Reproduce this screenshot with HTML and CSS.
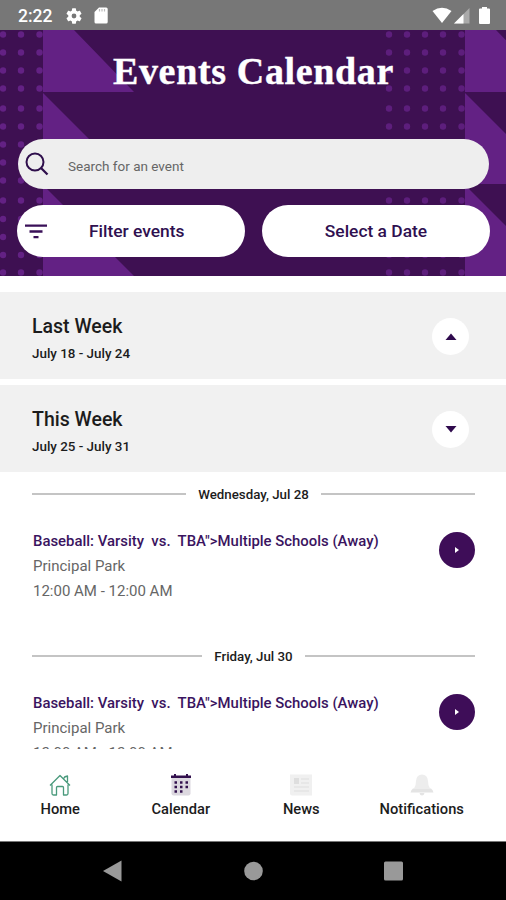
FILE: index.html
```html
<!DOCTYPE html>
<html lang="en">
<head>
    <meta charset="UTF-8">
    <title>Events Calendar</title>
    <link rel="stylesheet" href="styles.css">
</head>
<body>
    <div class="status-bar">
        <span class="clock">2:22</span>
        <svg class="gear" width="16" height="16" viewBox="2 2 20 20"><path fill="#fff" d="M19.14 12.94c.04-.3.06-.61.06-.94s-.02-.64-.07-.94l2.03-1.58a.49.49 0 0 0 .12-.61l-1.92-3.32a.49.49 0 0 0-.59-.22l-2.39.96a7 7 0 0 0-1.62-.94l-.36-2.54a.48.48 0 0 0-.48-.41h-3.84a.48.48 0 0 0-.47.41l-.36 2.54c-.59.24-1.13.57-1.62.94l-2.39-.96a.48.48 0 0 0-.59.22L2.74 8.87a.48.48 0 0 0 .12.61l2.03 1.58a7.5 7.5 0 0 0 0 1.88l-2.03 1.58a.49.49 0 0 0-.12.61l1.92 3.32c.12.22.37.29.59.22l2.39-.96c.5.38 1.03.7 1.62.94l.36 2.54c.05.24.24.41.48.41h3.84c.24 0 .44-.17.47-.41l.36-2.54a7 7 0 0 0 1.62-.94l2.39.96c.22.08.47 0 .59-.22l1.92-3.32a.48.48 0 0 0-.12-.61zM12 15a3 3 0 1 1 0-6 3 3 0 0 1 0 6z"/></svg>
        <svg class="sd" width="14" height="17" viewBox="0 0 14 17"><path fill="#fff" d="M5 .5h7.2A1.5 1.5 0 0 1 13.700 2v13a1.500 1.500 0 0 1-1.500 1.500H2A1.500 1.500 0 0 1 .5 15V5z"/><path stroke="#bbb" stroke-width="1.200" d="M5.500 2v2.500M8 2v2.500M10.500 2v2.500"/></svg>
        <div class="status-right">
            <svg width="20" height="17" viewBox="0 0 20 17"><path fill="#fff" d="M.5 4Q10-2.500 19.500 4L10 16z"/></svg>
            <svg width="16" height="17" viewBox="0 0 16 17"><path fill="#aaa" d="M15.500 1v15.500H0z"/><path fill="#fff" d="M9.500 7v9.500H0z"/></svg>
            <svg class="battery" width="11" height="17" viewBox="0 0 11 17"><path fill="#fff" d="M3 0h5v1.500h2a1 1 0 0 1 1 1V16a1 1 0 0 1-1 1H1a1 1 0 0 1-1-1V2.500a1 1 0 0 1 1-1h2z"/></svg>
        </div>
    </div>

    <header>
        <svg class="pattern" width="506" height="246" viewBox="0 30 506 246">
            <defs>
                <g id="dots" fill="#632184">
                    <circle cx="0" cy="34.500" r="3.200"/><circle cx="0" cy="52.500" r="3.200"/><circle cx="0" cy="70.500" r="3.200"/><circle cx="0" cy="88.500" r="3.200"/>
                    <circle cx="0" cy="108.500" r="3.200"/><circle cx="0" cy="126.500" r="3.200"/><circle cx="0" cy="144.500" r="3.200"/><circle cx="0" cy="162.500" r="3.200"/><circle cx="0" cy="180.500" r="3.200"/>
                    <circle cx="0" cy="200.500" r="3.200"/><circle cx="0" cy="219" r="3.200"/><circle cx="0" cy="237" r="3.200"/><circle cx="0" cy="255" r="3.200"/><circle cx="0" cy="272.500" r="3.200"/>
                </g>
                <path id="flags" fill="#632184" d="M0 30h31l60 62H0zM0 93l91 91H0zM0 185l91 91H0z"/>
            </defs>
            <use href="#dots" x="3"/><use href="#dots" x="21"/><use href="#dots" x="39.500"/>
            <g opacity=".85"><use href="#dots" x="389"/><use href="#dots" x="407"/><use href="#dots" x="425"/><use href="#dots" x="443"/><use href="#dots" x="461.500"/></g>
            <use href="#flags" x="43"/>
            <use href="#flags" x="465"/>
        </svg>
        <h1>Events Calendar</h1>
        <div class="search">
            <svg width="24" height="24" viewBox="0 0 24 24" fill="none" stroke="#2f0f4c" stroke-width="2"><circle cx="10" cy="10" r="8.500"/><path d="M16 16l6.500 6.500" stroke-width="2.300"/></svg>
            <span>Search for an event</span>
        </div>
        <div class="actions">
            <div class="pill filter">
                <svg width="22" height="15" viewBox="0 0 22 15" stroke="#3a1058" stroke-width="2.300"><path d="M0 1.700h22M4.500 7.500h13M8.500 13.200h5"/></svg>
                <span>Filter events</span>
            </div>
            <div class="pill">Select a Date</div>
        </div>
    </header>

    <main>
        <section class="week">
            <div>
                <h2>Last Week</h2>
                <p>July 18 - July 24</p>
            </div>
            <div class="toggle"><svg width="12" height="7" viewBox="0 0 12 7"><path fill="#2f0a4d" d="M.5 7L6 .5 11.500 7z"/></svg></div>
        </section>
        <section class="week">
            <div>
                <h2>This Week</h2>
                <p>July 25 - July 31</p>
            </div>
            <div class="toggle"><svg width="12" height="7" viewBox="0 0 12 7"><path fill="#2f0a4d" d="M.5 0h11L6 6.500z"/></svg></div>
        </section>

        <div class="day"><span>Wednesday, Jul 28</span></div>
        <article class="event">
            <div>
                <h3>Baseball: Varsity&nbsp; vs.&nbsp; TBA"&gt;Multiple Schools (Away)</h3>
                <p>Principal Park</p>
                <p>12:00 AM - 12:00 AM</p>
            </div>
            <div class="go"><svg width="4" height="6" viewBox="0 0 4 6"><path fill="#fff" d="M0 0l4 3-4 3z"/></svg></div>
        </article>

        <div class="day"><span>Friday, Jul 30</span></div>
        <article class="event">
            <div>
                <h3>Baseball: Varsity&nbsp; vs.&nbsp; TBA"&gt;Multiple Schools (Away)</h3>
                <p>Principal Park</p>
                <p>12:00 AM - 12:00 AM</p>
            </div>
            <div class="go"><svg width="4" height="6" viewBox="0 0 4 6"><path fill="#fff" d="M0 0l4 3-4 3z"/></svg></div>
        </article>
    </main>

    <nav>
        <div class="tab">
            <svg width="22" height="22" viewBox="0 0 22 22" fill="none" stroke="#4a9a7c" stroke-width="1.300" stroke-linejoin="round"><path d="M3 10.500v9Q3 21 4.500 21h3v-7.500q0-1 1-1h5q1 0 1 1V21h3q1.500 0 1.500-1.500v-9M1 11.500L11 1.500l10 10M15 4.500q0-2 3.500-2.500v6"/></svg>
            <span>Home</span>
        </div>
        <div class="tab">
            <svg width="22" height="22" viewBox="0 0 22 22"><path fill="#dcd8df" d="M1.500 4h19v15.500q0 2-2 2h-15q-2 0-2-2z"/><path fill="#32104d" d="M1 1.500h3V0h2v1.500h10V0h2v1.500h3V4H1z"/><path stroke="#32104d" stroke-width="2.500" stroke-dasharray="2.500 3" d="M4.500 8.500h14M4.500 13h14M4.500 17.500h8.500"/></svg>
            <span>Calendar</span>
        </div>
        <div class="tab">
            <svg width="22" height="22" viewBox="0 0 22 22"><path fill="#f0f0f0" d="M0 .5h22v21H2q-2 0-2-2z"/><path fill="#dedede" d="M4 4h5v6H4z"/><path stroke="#dedede" stroke-width="1.200" d="M11 5h8M11 9h8M4 13h15M4 17h15"/></svg>
            <span>News</span>
        </div>
        <div class="tab">
            <svg width="24" height="22" viewBox="0 0 24 22"><path fill="#ededed" d="M12 .5q5.500 0 6 6.500 0 5 2 7.500H4Q6 12 6 7 6.500.5 12 .5z"/><path fill="#e4e4e4" d="M3 14.500h18q2 1.500 2.500 4H.5q.5-2.500 2.500-4zM9.500 19h5q-.5 2.500-2.500 2.500T9.500 19z"/></svg>
            <span>Notifications</span>
        </div>
    </nav>

    <footer>
        <svg width="20" height="22" viewBox="0 0 20 22"><path fill="#999" d="M18.500 .5v21L0 11z"/></svg>
        <svg width="20" height="20" viewBox="0 0 20 20"><circle cx="10.500" cy="10" r="9.300" fill="#999"/></svg>
        <svg width="20" height="20" viewBox="0 0 20 20"><rect x="1" y=".5" width="19" height="19" rx="1.500" fill="#999"/></svg>
    </footer>
</body>
</html>
```
FILE: styles.css
```css
* {
    box-sizing: border-box;
}
body {
    font-family: Roboto, "Liberation Sans", sans-serif;
    margin: 0;
    height: 900px;
    display: flex;
    flex-direction: column;
    background-color: #fff;
    color: #1c1c1c;
    overflow: hidden;
}
h1, h2, h3, p {
    margin: 0;
}
svg {
    display: block;
    flex: none;
}
.status-bar {
    height: 30px;
    display: flex;
    align-items: center;
    padding: 1px 16px 0 18px;
    background-color: #777;
    color: white;
}
.clock {
    width: 48px;
    font-size: 17.5px;
    font-weight: 500;
}
.sd {
    margin-left: 12px;
}
.status-right {
    display: flex;
    gap: 2px;
    margin-left: auto;
}
.battery {
    margin-left: 7px;
}
header {
    position: relative;
    height: 246px;
    background-color: #3e1052;
    padding: 20px 16px 0 17px;
}
.pattern {
    position: absolute;
    top: 0;
    left: 0;
}
h1, .search, .actions {
    position: relative;
}
h1 {
    height: 89px;
    line-height: 42px;
    text-align: center;
    color: white;
    font-family: "Liberation Serif", serif;
    font-size: 38px;
    letter-spacing: 0.65px;
    -webkit-text-stroke: 0.4px white;
}
.search {
    display: flex;
    align-items: center;
    gap: 18px;
    height: 50px;
    margin: 0 1px 0 1px;
    padding-left: 7px;
    border-radius: 25px;
    background-color: #eee;
    color: #666;
    font-size: 13.5px;
}
.search span {
    padding: 4px 0 0 1px;
}
.actions {
    display: flex;
    gap: 17px;
    margin-top: 16px;
}
.pill {
    width: 228px;
    display: flex;
    align-items: center;
    justify-content: center;
    height: 52px;
    border-radius: 26px;
    background-color: white;
    color: #2f1050;
    font-size: 17.4px;
    font-weight: 500;
}
.filter {
    justify-content: flex-start;
    gap: 42px;
    padding-left: 8px;
}
main {
    height: 473px;
    padding-top: 16px;
    overflow: hidden;
}
.week {
    display: flex;
    justify-content: space-between;
    align-items: center;
    height: 87px;
    margin-bottom: 6px;
    padding: 2px 37px 0 32px;
    background-color: #f1f1f1;
}
.week h2 {
    padding-top: 6px;
    font-size: 19.5px;
    font-weight: 500;
    line-height: 28px;
}
.week p {
    font-size: 13.4px;
    font-weight: 500;
    line-height: 26px;
}
.toggle, .go {
    display: flex;
    align-items: center;
    justify-content: center;
    border-radius: 50%;
}
.toggle {
    width: 37px;
    height: 37px;
    background-color: white;
}
.day {
    display: flex;
    align-items: center;
    gap: 12px;
    height: 20px;
    margin: 0 31px 0 32px;
    font-size: 13.3px;
    font-weight: 500;
}
.week + .day {
    margin-top: 12px;
}
.day::before, .day::after {
    content: "";
    flex: 1;
    height: 2px;
    background-color: #c4c4c4;
}
.event {
    display: flex;
    justify-content: space-between;
    height: 142px;
    padding: 25px 31px 0 33px;
    font-size: 15px;
    line-height: 25px;
    color: #666;
}
.event h3 {
    color: #3a1460;
    font-size: 14.9px;
    font-weight: 500;
}
.go {
    width: 36px;
    height: 36px;
    margin-top: 3px;
    background-color: #3e0d58;
}
nav {
    display: flex;
    height: 92px;
    padding: 25px 24px 0 0;
}
.tab {
    flex: 1 1 0;
    display: flex;
    flex-direction: column;
    align-items: center;
    gap: 5px;
    font-size: 14.7px;
    font-weight: 500;
    line-height: 17px;
}
footer {
    display: flex;
    justify-content: center;
    align-items: center;
    gap: 120px;
    height: 59px;
    border-top: 1px solid #777;
    background-color: black;
}
```
